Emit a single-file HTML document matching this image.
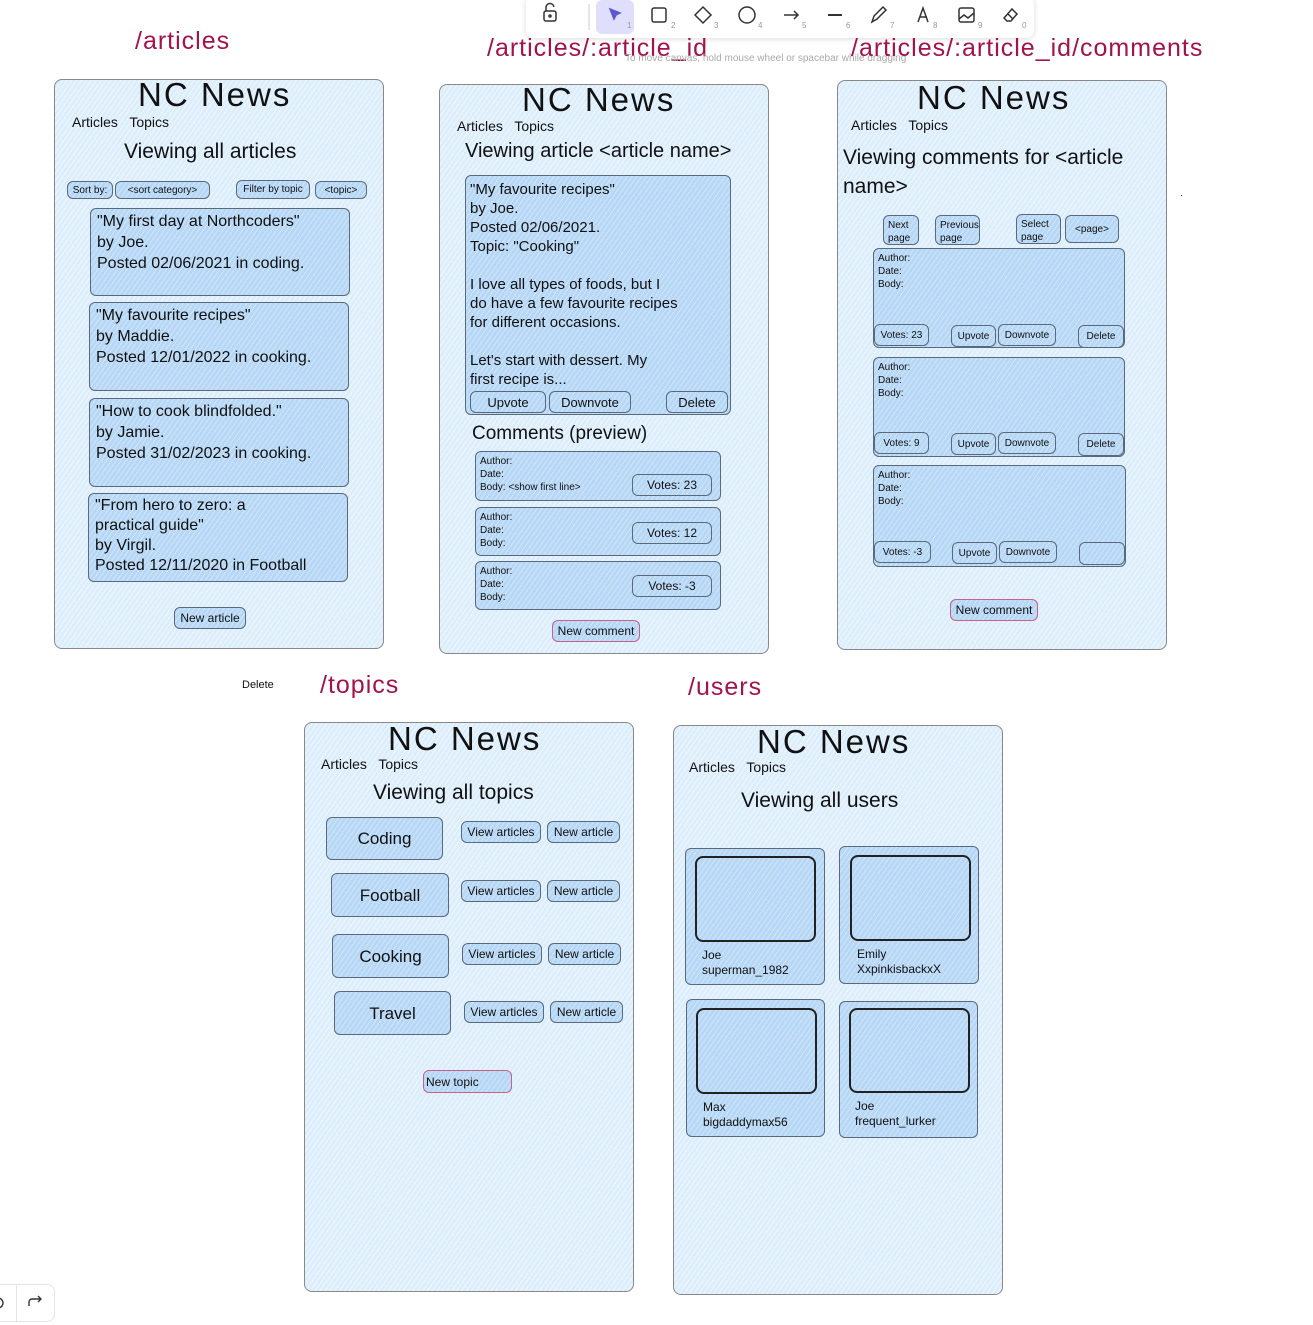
<!DOCTYPE html>
<html><head><meta charset="utf-8"><style>
*{margin:0;padding:0;box-sizing:border-box}
body{width:1313px;height:1325px;background:#fff;position:relative;overflow:hidden;font-family:"Liberation Sans",sans-serif;color:#111}
.a{position:absolute;white-space:nowrap}
.f{position:absolute;border:1.5px solid #888;border-radius:8px;background:#dcedfc repeating-linear-gradient(-55deg,rgba(255,255,255,.55) 0 1px,transparent 1px 4px)}
.b{position:absolute;border:1.5px solid #5b6a7a;border-radius:6px;background:#b6d7f5 repeating-linear-gradient(-55deg,rgba(255,255,255,.35) 0 1px,transparent 1px 4px)}
.t{font-size:12px;display:flex;align-items:center;justify-content:center;line-height:1}
.lbl{color:#a3134a;font-size:25px;letter-spacing:1px}
.nc{font-size:33px;letter-spacing:2px}
.nav{font-size:14px}
.h{font-size:21px}
.bx{font-size:16px;line-height:21px;padding:2px 6px}
.sm{font-size:10px;line-height:13px;padding:3px 4px}
.pk{border-color:#c9608a}
.k{border:2px solid #222;border-radius:8px;background:transparent}
</style></head><body>

<!-- toolbar -->
<div class="a" style="left:526px;top:-4px;width:508px;height:42px;background:#fff;border-radius:8px;box-shadow:0 1px 6px rgba(0,0,0,.15)"></div>
<div class="a" style="left:596px;top:0;width:38px;height:34px;background:#e0dffb;border-radius:6px"></div>
<svg class="a" style="left:526px;top:0" width="508" height="38" fill="none" stroke="#333" stroke-width="1.5">
<rect x="18" y="11" width="12" height="10" rx="2"/><path d="M20 11v-3a4 4 0 0 1 8 -1"/><circle cx="24" cy="16" r="1"/>
<path d="M63 4v26" stroke="#ddd"/>
<path d="M84 9l10 4-4 2-2 4z" fill="#5b57d1" stroke="#5b57d1"/>
<rect x="126" y="8" width="14" height="14" rx="2"/>
<path d="M177 7l8 8-8 8-8-8z"/>
<circle cx="221" cy="15" r="8"/>
<path d="M258 15h14M268 11l4 4-4 4"/>
<path d="M302 15h14" stroke-width="2"/>
<path d="M346 22l2-6 9-9 3 3-9 9z"/>
<path d="M392 22l5-14 5 14M394 17h7"/>
<rect x="433" y="8" width="15" height="14" rx="2"/><path d="M433 19l5-4 4 3 6-5"/>
<path d="M478 18l8-9 5 5-6 7h-4zM482 14l5 5"/>
<g font-size="8" fill="#999" stroke="none" font-family="Liberation Sans"><text x="101" y="28">1</text><text x="145" y="28">2</text><text x="188" y="28">3</text><text x="232" y="28">4</text><text x="276" y="28">5</text><text x="320" y="28">6</text><text x="364" y="28">7</text><text x="407" y="28">8</text><text x="452" y="28">9</text><text x="496" y="28">0</text></g>
</svg>

<!-- labels -->
<div class="a lbl" style="left:135px;top:27px">/articles</div>
<div class="a lbl" style="left:487px;top:34px">/articles/:article_id</div>
<div class="a" style="left:625px;top:53px;font-size:10px;color:#aaa">To move canvas, hold mouse wheel or spacebar while dragging</div>
<div class="a lbl" style="left:851px;top:34px">/articles/:article_id/comments</div>
<div class="a lbl" style="left:320px;top:671px">/topics</div>
<div class="a lbl" style="left:688px;top:673px">/users</div>
<div class="a" style="left:242px;top:679px;font-size:11px">Delete</div>

<!-- Frame 1 -->
<div class="f" style="left:54px;top:79px;width:330px;height:570px"></div>
<div class="a nc" style="left:138px;top:76px">NC News</div>
<div class="a nav" style="left:72px;top:114px">Articles&nbsp;&nbsp; Topics</div>
<div class="a h" style="left:124px;top:140px">Viewing all articles</div>
<div class="b t sm" style="left:67px;top:181px;width:46px;height:18px">Sort by:</div>
<div class="b t sm" style="left:115px;top:181px;width:95px;height:18px">&lt;sort category&gt;</div>
<div class="b t sm" style="left:236px;top:180px;width:74px;height:19px">Filter by topic</div>
<div class="b t sm" style="left:315px;top:181px;width:52px;height:18px">&lt;topic&gt;</div>
<div class="b bx" style="left:90px;top:208px;width:260px;height:88px">"My first day at Northcoders"<br>by Joe.<br>Posted 02/06/2021 in coding.</div>
<div class="b bx" style="left:89px;top:302px;width:260px;height:89px">"My favourite recipes"<br>by Maddie.<br>Posted 12/01/2022 in cooking.</div>
<div class="b bx" style="left:89px;top:398px;width:260px;height:89px">"How to cook blindfolded."<br>by Jamie.<br>Posted 31/02/2023 in cooking.</div>
<div class="b bx" style="left:88px;top:493px;width:260px;height:89px;line-height:20px">"From hero to zero: a<br>practical guide"<br>by Virgil.<br>Posted 12/11/2020 in Football</div>
<div class="b t" style="left:174px;top:607px;width:72px;height:22px">New article</div>

<!-- Frame 2 -->
<div class="f" style="left:439px;top:84px;width:330px;height:570px"></div>
<div class="a nc" style="left:522px;top:81px">NC News</div>
<div class="a nav" style="left:457px;top:118px">Articles&nbsp;&nbsp; Topics</div>
<div class="a" style="left:465px;top:140px;font-size:20px">Viewing article &lt;article name&gt;</div>
<div class="b" style="left:465px;top:175px;width:266px;height:240px;font-size:15px;line-height:19px;padding:4px 4px">"My favourite recipes"<br>by Joe.<br>Posted 02/06/2021.<br>Topic: "Cooking"<br><br>I love all types of foods, but I<br>do have a few favourite recipes<br>for different occasions.<br><br>Let's start with dessert. My<br>first recipe is...</div>
<div class="b t" style="left:470px;top:391px;width:76px;height:22px;font-size:13px">Upvote</div>
<div class="b t" style="left:549px;top:391px;width:82px;height:22px;font-size:13px">Downvote</div>
<div class="b t" style="left:666px;top:391px;width:62px;height:22px;font-size:13px">Delete</div>
<div class="a" style="left:472px;top:423px;font-size:19px">Comments (preview)</div>
<div class="b sm" style="left:475px;top:451px;width:246px;height:50px">Author:<br>Date:<br>Body: &lt;show first line&gt;</div>
<div class="b t" style="left:632px;top:474px;width:80px;height:22px">Votes: 23</div>
<div class="b sm" style="left:475px;top:507px;width:246px;height:49px">Author:<br>Date:<br>Body:</div>
<div class="b t" style="left:632px;top:522px;width:80px;height:22px">Votes: 12</div>
<div class="b sm" style="left:475px;top:561px;width:246px;height:49px">Author:<br>Date:<br>Body:</div>
<div class="b t" style="left:632px;top:575px;width:80px;height:22px">Votes: -3</div>
<div class="b t pk" style="left:552px;top:620px;width:88px;height:22px">New comment</div>

<!-- Frame 3 -->
<div class="f" style="left:837px;top:80px;width:330px;height:570px"></div>
<div class="a nc" style="left:917px;top:79px">NC News</div>
<div class="a nav" style="left:851px;top:117px">Articles&nbsp;&nbsp; Topics</div>
<div class="a h" style="left:843px;top:143px;line-height:29px">Viewing comments for &lt;article<br>name&gt;</div>
<div class="b sm" style="left:883px;top:215px;width:36px;height:30px">Next<br>page</div>
<div class="b sm" style="left:935px;top:215px;width:45px;height:30px">Previous<br>page</div>
<div class="b sm" style="left:1016px;top:214px;width:45px;height:30px">Select<br>page</div>
<div class="b t sm" style="left:1065px;top:215px;width:54px;height:28px">&lt;page&gt;</div>
<div class="b sm" style="left:873px;top:248px;width:252px;height:100px">Author:<br>Date:<br>Body:</div>
<div class="b sm" style="left:873px;top:357px;width:252px;height:100px">Author:<br>Date:<br>Body:</div>
<div class="b sm" style="left:873px;top:465px;width:253px;height:102px">Author:<br>Date:<br>Body:</div>
<div class="b t sm" style="left:874px;top:324px;width:55px;height:22px">Votes: 23</div>
<div class="b t sm" style="left:951px;top:325px;width:45px;height:22px">Upvote</div>
<div class="b t sm" style="left:998px;top:324px;width:58px;height:22px">Downvote</div>
<div class="b t sm" style="left:1078px;top:325px;width:46px;height:23px">Delete</div>
<div class="b t sm" style="left:874px;top:432px;width:55px;height:22px">Votes: 9</div>
<div class="b t sm" style="left:951px;top:433px;width:45px;height:22px">Upvote</div>
<div class="b t sm" style="left:998px;top:432px;width:58px;height:22px">Downvote</div>
<div class="b t sm" style="left:1078px;top:433px;width:46px;height:23px">Delete</div>
<div class="b t sm" style="left:874px;top:541px;width:57px;height:22px">Votes: -3</div>
<div class="b t sm" style="left:952px;top:542px;width:45px;height:22px">Upvote</div>
<div class="b t sm" style="left:999px;top:541px;width:58px;height:22px">Downvote</div>
<div class="b" style="left:1079px;top:542px;width:46px;height:23px"></div>
<div class="b t pk" style="left:950px;top:599px;width:88px;height:22px">New comment</div>

<!-- Frame 4 -->
<div class="f" style="left:304px;top:722px;width:330px;height:570px"></div>
<div class="a nc" style="left:388px;top:720px">NC News</div>
<div class="a nav" style="left:321px;top:756px">Articles&nbsp;&nbsp; Topics</div>
<div class="a h" style="left:373px;top:781px">Viewing all topics</div>
<div class="b t" style="left:326px;top:817px;width:117px;height:43px;font-size:17px">Coding</div>
<div class="b t" style="left:331px;top:873px;width:118px;height:44px;font-size:17px">Football</div>
<div class="b t" style="left:332px;top:934px;width:117px;height:44px;font-size:17px">Cooking</div>
<div class="b t" style="left:334px;top:991px;width:117px;height:44px;font-size:17px">Travel</div>
<div class="b t" style="left:461px;top:821px;width:80px;height:22px">View articles</div>
<div class="b t" style="left:547px;top:821px;width:73px;height:22px">New article</div>
<div class="b t" style="left:461px;top:880px;width:80px;height:22px">View articles</div>
<div class="b t" style="left:547px;top:880px;width:73px;height:22px">New article</div>
<div class="b t" style="left:462px;top:943px;width:80px;height:22px">View articles</div>
<div class="b t" style="left:548px;top:943px;width:73px;height:22px">New article</div>
<div class="b t" style="left:464px;top:1001px;width:80px;height:22px">View articles</div>
<div class="b t" style="left:550px;top:1001px;width:73px;height:22px">New article</div>
<div class="b t pk" style="left:423px;top:1070px;width:89px;height:23px;justify-content:flex-start;padding-left:2px">New topic</div>

<!-- Frame 5 -->
<div class="f" style="left:673px;top:725px;width:330px;height:570px"></div>
<div class="a nc" style="left:757px;top:723px">NC News</div>
<div class="a nav" style="left:689px;top:759px">Articles&nbsp;&nbsp; Topics</div>
<div class="a h" style="left:741px;top:789px">Viewing all users</div>
<div class="b" style="left:685px;top:848px;width:140px;height:137px"></div>
<div class="a k" style="left:695px;top:856px;width:121px;height:86px"></div>
<div class="a" style="left:702px;top:948px;font-size:12px;line-height:15px">Joe<br>superman_1982</div>
<div class="b" style="left:839px;top:846px;width:140px;height:138px"></div>
<div class="a k" style="left:850px;top:855px;width:121px;height:86px"></div>
<div class="a" style="left:857px;top:947px;font-size:12px;line-height:15px">Emily<br>XxpinkisbackxX</div>
<div class="b" style="left:686px;top:999px;width:139px;height:138px"></div>
<div class="a k" style="left:696px;top:1008px;width:121px;height:86px"></div>
<div class="a" style="left:703px;top:1100px;font-size:12px;line-height:15px">Max<br>bigdaddymax56</div>
<div class="b" style="left:839px;top:1001px;width:139px;height:137px"></div>
<div class="a k" style="left:849px;top:1008px;width:121px;height:85px"></div>
<div class="a" style="left:855px;top:1099px;font-size:12px;line-height:15px">Joe<br>frequent_lurker</div>

<div class="a" style="left:1181px;top:195px;width:1px;height:1px;background:#333"></div>

<!-- bottom-left controls -->
<div class="a" style="left:-10px;top:1284px;width:65px;height:38px;border:1px solid #e5e5e5;border-radius:8px;background:#fff"></div>
<div class="a" style="left:16px;top:1284px;width:1px;height:38px;background:#e5e5e5"></div>
<svg class="a" style="left:0;top:1284px" width="55" height="38" fill="none" stroke="#333" stroke-width="1.4"><path d="M-2 14a5 5 0 0 1 0 10"/><path d="M29 22v-4a3 3 0 0 1 3-3h9M38 12l3 3-3 3"/></svg>
</body></html>
